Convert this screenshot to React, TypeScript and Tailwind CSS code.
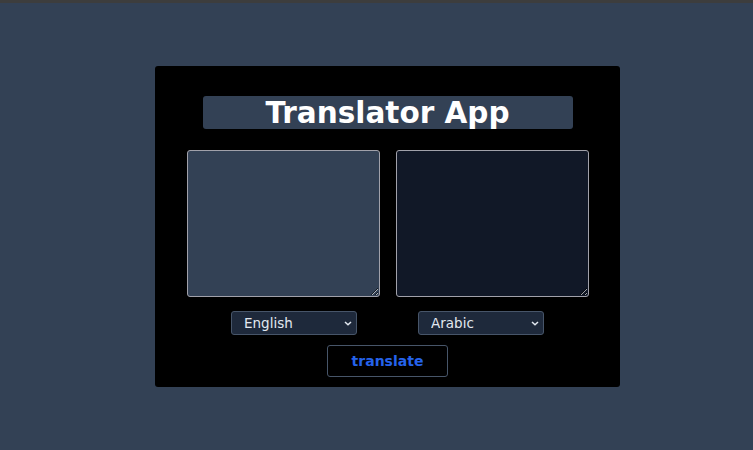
import { useState } from "react";

const font = { fontFamily: '"DejaVu Sans", "Liberation Sans", sans-serif' };

function LangSelect({ value, onChange }: { value: string; onChange: (v: string) => void }) {
  return (
    <div className="relative w-[126px] h-[24px]">
      <select
        value={value}
        onChange={(e) => onChange(e.target.value)}
        className="appearance-none w-full h-full rounded-[3px] border border-[#475569] bg-[#1e293b] pl-[12px] text-[13.5px] text-[#e2e8f0] outline-none"
      >
        <option>English</option>
        <option>Arabic</option>
        <option>French</option>
      </select>
      <svg
        className="pointer-events-none absolute right-[5px] top-[10px]"
        width="8"
        height="5"
        viewBox="0 0 8 5"
        fill="none"
      >
        <path d="M1 1l3 2.8L7 1" stroke="#e2e8f0" strokeWidth="1.5" />
      </svg>
    </div>
  );
}

export default function App() {
  const [from, setFrom] = useState("English");
  const [to, setTo] = useState("Arabic");

  return (
    <div className="w-[753px] h-[450px] overflow-hidden" style={font}>
      <div className="h-[3px] bg-[#3d3d3d]" />
      <div className="h-[447px] bg-[#334155] pt-[63px]">
        <div className="ml-[155px] w-[465px] h-[321px] rounded-[3px] bg-black pt-[30px] flex flex-col items-center">
          {/* Title */}
          <div className="w-[370px] h-[33px] pt-[3px] rounded-[3px] bg-[#334155] flex items-center justify-center">
            <h1 className="text-[29.5px] font-bold text-white leading-none">Translator App</h1>
          </div>

          {/* Text areas */}
          <div className="mt-[21px] flex gap-[16px]">
            <textarea className="w-[193px] h-[147px] rounded-[3px] border border-[#a1a1aa] bg-[#334155] text-white p-2 outline-none" />
            <textarea
              readOnly
              className="w-[193px] h-[147px] rounded-[3px] border border-[#a1a1aa] bg-[#111827] text-white p-2 outline-none"
            />
          </div>

          {/* Language pickers */}
          <div className="mt-[14px] flex gap-[61px]">
            <LangSelect value={from} onChange={setFrom} />
            <LangSelect value={to} onChange={setTo} />
          </div>

          <button className="mt-[10px] w-[121px] h-[32px] rounded-[3px] border border-[#475569] bg-black text-[14px] font-bold text-[#2563eb]">
            translate
          </button>
        </div>
      </div>
    </div>
  );
}
